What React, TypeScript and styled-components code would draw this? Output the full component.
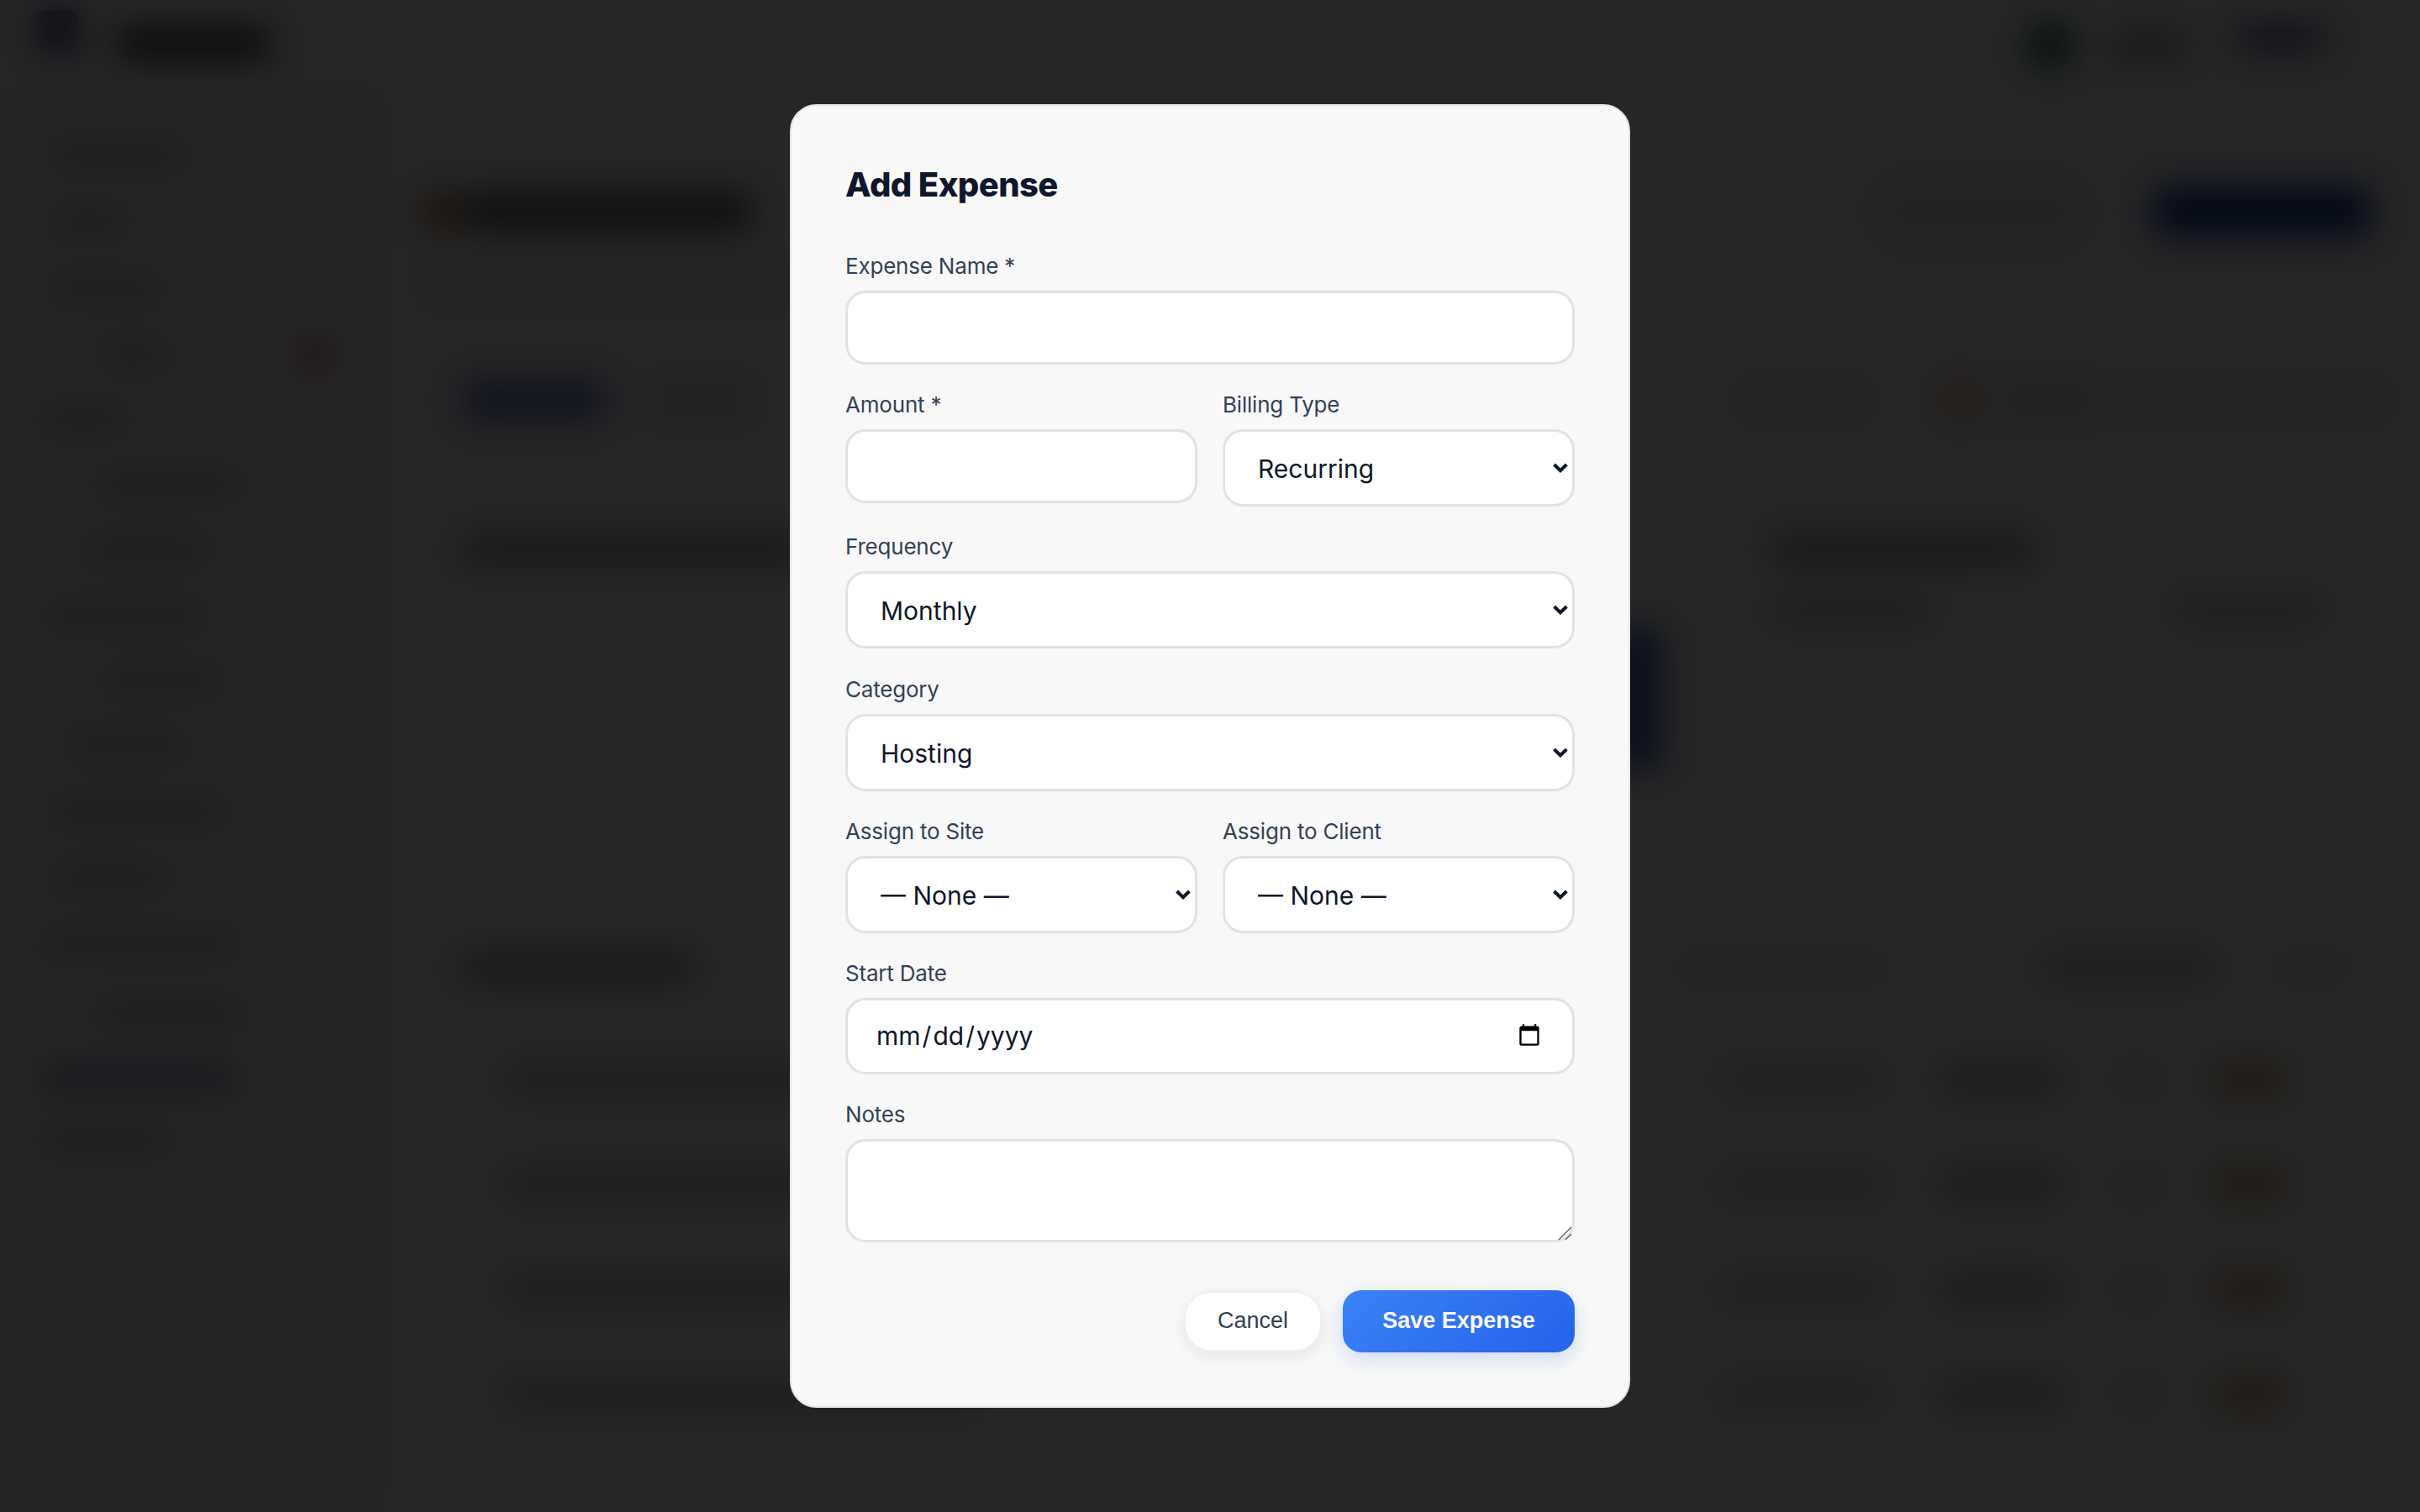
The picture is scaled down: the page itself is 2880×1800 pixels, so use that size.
import React from "react";
import styled, { createGlobalStyle } from "styled-components";

const navRows = [
  { h: 40, left: 30, w: 80 },
  { h: 40, left: 30, w: 45 },
  { h: 40, left: 30, w: 65 },
  { h: 38, left: 60, w: 40, badge: true },
  { h: 39, left: 25, w: 50 },
  { h: 39, left: 58, w: 85 },
  { h: 39, left: 50, w: 75 },
  { h: 39, left: 28, w: 92 },
  { h: 38, left: 62, w: 68 },
  { h: 39, left: 40, w: 70 },
  { h: 40, left: 30, w: 105 },
  { h: 39, left: 30, w: 70 },
  { h: 40, left: 25, w: 115 },
  { h: 42, left: 58, w: 87 },
  { h: 36, left: 25, w: 115, active: true },
  { h: 38, left: 25, w: 75 },
];

const tableRows = [0, 1, 2, 3];

const GlobalStyle = createGlobalStyle`
  html, body {
    margin: 0;
    padding: 0;
    background: #252525;
    overflow: hidden;
  }
  * {
    box-sizing: border-box;
  }
`;

const Stage = styled.div`
  zoom: 2;
  position: relative;
  width: 1440px;
  height: 900px;
  overflow: hidden;
  background: #fbfbfb;
  font-family: Inter, "Liberation Sans", sans-serif;
`;

// the dashboard that sits behind the dialog, only visible as blurred shapes
const Page = styled.div`
  display: grid;
  grid-template-columns: 222px 1fr;
  grid-template-rows: 56px 1fr;
  height: 100%;
`;

const Brand = styled.div`
  grid-column: 1 / 3;
  display: flex;
  align-items: flex-start;
  padding: 6px 55px 0 22px;
`;

const Logo = styled.div`
  width: 25px;
  height: 25px;
  border-radius: 6px;
  background: #3b5188;
`;

const BrandName = styled.div`
  width: 90px;
  height: 18px;
  margin: 11px 0 0 23px;
  background: #2c3440;
  border-radius: 4px;
`;

const Spacer = styled.div`
  flex: 1;
`;

const Avatar = styled.div`
  width: 26px;
  height: 26px;
  margin-top: 8px;
  border-radius: 50%;
  background: #065f46;
`;

const UserName = styled.div`
  width: 45px;
  height: 10px;
  margin: 16px 0 0 23px;
  background: #64748b;
  border-radius: 3px;
`;

const UserBadge = styled.div`
  width: 56px;
  height: 13px;
  margin: 10px 0 0 28px;
  background: #475a8f;
  border-radius: 6px;
`;

const Sidebar = styled.aside`
  padding-top: 16px;
  background: #f5f6f7;
  border-right: 8px solid #eef0f4;
`;

const NavRow = styled.div<{ $h: number }>`
  display: flex;
  align-items: center;
  height: ${(p) => p.$h}px;
`;

const NavLabel = styled.div<{ $left: number; $w: number; $active?: boolean }>`
  width: ${(p) => p.$w}px;
  height: 12px;
  margin-left: ${(p) => p.$left}px;
  border-radius: 3px;
  background: ${(p) => (p.$active ? "#7d8db0" : "#b4bac3")};
`;

const NavBadge = styled.div`
  width: 16px;
  height: 16px;
  margin-left: 79px;
  border-radius: 50%;
  background: #dc2626;
`;

const Main = styled.main`
  padding: 54px 20px 0 33px;
`;

const TitleRow = styled.div`
  display: flex;
  align-items: center;
  height: 32px;
`;

const TitleIcon = styled.div`
  width: 18px;
  height: 18px;
  margin-right: 4px;
  border-radius: 4px;
  background: #92400e;
`;

const Title = styled.div`
  width: 170px;
  height: 20px;
  background: #4a4a4a;
  border-radius: 4px;
`;

const GhostButton = styled.div`
  width: 118px;
  height: 30px;
  background: #e6e8eb;
  border-radius: 8px;
`;

const PrimaryButton = styled.div`
  width: 130px;
  height: 30px;
  margin-left: 44px;
  margin-right: 9px;
  background: #1e40af;
  border-radius: 8px;
`;

const Subtitle = styled.div`
  width: 280px;
  height: 10px;
  margin-top: 21px;
  border-radius: 3px;
  background: #d4d7dc;
`;

const Tabs = styled.div`
  display: flex;
  align-items: center;
  height: 28px;
  margin: 51px 0 0 19px;
`;

const ActiveTab = styled.div`
  width: 88px;
  height: 24px;
  background: #6c80c8;
  border-radius: 12px;
`;

const Tab = styled.div<{ $w: number; $gap: number; $faint?: boolean }>`
  width: ${(p) => p.$w}px;
  height: 12px;
  margin-left: ${(p) => p.$gap}px;
  background: ${(p) => (p.$faint ? "#e8eaee" : "#bcc2cb")};
  border-radius: 3px;
`;

const TabDot = styled.div`
  width: 14px;
  height: 14px;
  margin-left: 50px;
  border-radius: 50%;
  background: #ea580c;
`;

const Charts = styled.div`
  display: grid;
  grid-template-columns: 1fr 400px;
  gap: 22px;
  margin-top: 53px;
  height: 199px;
`;

const Card = styled.section`
  position: relative;
  padding: 14px 18px;
  border: 2px solid #f4f5f7;
  border-radius: 12px;
  background: #ffffff;
`;

const CardTitle = styled.div<{ $w: number; $inset?: number }>`
  width: ${(p) => p.$w}px;
  height: 14px;
  margin-left: ${(p) => p.$inset ?? 0}px;
  background: #858990;
  border-radius: 4px;
`;

const ChartBar = styled.div`
  position: absolute;
  top: 67px;
  right: 8px;
  width: 28px;
  height: 84px;
  border-radius: 4px;
  background: #3a5ab8;
`;

const LegendRow = styled.div`
  display: flex;
  justify-content: space-between;
  margin: 22px 20px 0 14px;
`;

const LegendText = styled.div<{ $w: number }>`
  width: ${(p) => p.$w}px;
  height: 12px;
  background: #b0b5bc;
  border-radius: 3px;
`;

const TableCard = styled(Card)`
  margin-top: 36px;
  padding: 0 18px;
  height: 340px;
`;

const TableHead = styled.div`
  display: flex;
  align-items: center;
  height: 69px;
  padding-bottom: 1px;
`;

const HeadAction = styled.div<{ $w: number; $gap: number; $dark?: boolean }>`
  width: ${(p) => p.$w}px;
  height: 14px;
  margin-left: ${(p) => p.$gap}px;
  background: ${(p) => (p.$dark ? "#b4b7bc" : "#e8eaee")};
  border-radius: 4px;
`;

const TableRow = styled.div`
  display: grid;
  grid-template-columns: 1fr 96px 70px 20px 41px;
  column-gap: 36px;
  align-items: center;
  height: 62.5px;
  padding: 0 41px 0 26px;
`;

const RowName = styled.div`
  width: 280px;
  height: 14px;
  background: #b4b7bc;
  border-radius: 4px;
`;

const RowCell = styled.div<{ $c: string; $h?: number }>`
  height: ${(p) => p.$h ?? 12}px;
  background: ${(p) => p.$c};
  border-radius: 4px;
`;

const Overlay = styled.div`
  position: absolute;
  inset: 0;
  display: flex;
  align-items: center;
  justify-content: center;
  background: rgba(0, 0, 0, 0.85);
  backdrop-filter: blur(10px);
`;

const Modal = styled.form`
  width: 500px;
  height: 776px;
  padding: 32px;
  background: #f8f8f8;
  border: 1px solid #e5e5e5;
  border-radius: 16px;
`;

const ModalTitle = styled.h2`
  margin: 0 0 26px;
  padding-top: 1px;
  font-size: 20px;
  line-height: 28px;
  font-weight: 800;
  letter-spacing: -0.3px;
  color: #0f172a;
`;

const Field = styled.div`
  margin-bottom: 15.6px;
  min-width: 0;
`;

const TwoCols = styled.div`
  display: grid;
  grid-template-columns: 1fr 1fr;
  column-gap: 15px;
  align-items: start;
`;

const Label = styled.label`
  display: block;
  margin-bottom: 6px;
  font-size: 13px;
  line-height: 17px;
  font-weight: 400;
  letter-spacing: -0.1px;
  color: #334155;
`;

const controlBase = `
  display: block;
  width: 100%;
  padding: 12px 16px;
  border: 1.5px solid #e2e2e2;
  border-radius: 12px;
  background: #ffffff;
  color: #0f172a;
  font-family: Inter, "Liberation Sans", sans-serif;
  outline: none;
`;

const TextInput = styled.input`
  ${controlBase}
  height: 44px;
  font-size: 14px;
`;

const SelectBox = styled.div`
  position: relative;
`;

const Select = styled.select`
  ${controlBase}
  appearance: none;
  height: 46px;
  padding: 12.5px 24px 11.5px 19.5px;
  font-size: 15px;
`;

const Chevron = styled.svg`
  position: absolute;
  top: 20px;
  right: 4px;
  width: 9px;
  height: 6px;
  pointer-events: none;
`;

const DateInput = styled.input`
  ${controlBase}
  height: 45.5px;
  font-size: 15px;
`;

const NotesBox = styled.div`
  position: relative;
`;

const Notes = styled.textarea`
  ${controlBase}
  height: 61.5px;
  font-size: 14px;
  resize: none;
`;

const Grip = styled.svg`
  position: absolute;
  right: 1px;
  bottom: 1px;
  width: 9px;
  height: 9px;
  pointer-events: none;
`;

const Actions = styled.div`
  display: flex;
  justify-content: flex-end;
  align-items: center;
  gap: 7px;
  margin-top: 28.4px;
`;

const CancelButton = styled.button`
  width: 82px;
  height: 36px;
  margin-right: 5.5px;
  border: 1px solid #f0f0f0;
  border-radius: 16px;
  background: #ffffff;
  color: #334155;
  font-family: "Liberation Sans", Arial, sans-serif;
  font-size: 13.5px;
  font-weight: 400;
  box-shadow: 0 3px 10px rgba(0, 0, 0, 0.07);
`;

const SaveButton = styled.button`
  width: 138px;
  height: 37px;
  border: none;
  border-radius: 11px;
  background: linear-gradient(135deg, #3b82f6, #2563eb);
  color: #ffffff;
  font-family: "Liberation Sans", Arial, sans-serif;
  font-size: 13.5px;
  font-weight: 700;
  box-shadow: 0 4px 12px rgba(37, 99, 235, 0.2);
`;

const Dropdown: React.FC<{ options: string[] }> = ({ options }) => (
  <SelectBox>
    <Select>
      {options.map((option) => (
        <option key={option}>{option}</option>
      ))}
    </Select>
    <Chevron viewBox="0 0 9 6" aria-hidden="true">
      <path d="M0.8 1 L4.5 4.6 L8.2 1" fill="none" stroke="#0f172a" strokeWidth="2" />
    </Chevron>
  </SelectBox>
);

export default function App() {
  return (
    <Stage>
      <GlobalStyle />
      <Page aria-hidden="true">
        <Brand>
          <Logo />
          <BrandName />
          <Spacer />
          <Avatar />
          <UserName />
          <UserBadge />
        </Brand>
        <Sidebar>
          {navRows.map((row, idx) => (
            <NavRow key={idx} $h={row.h}>
              <NavLabel $left={row.left} $w={row.w} $active={row.active} />
              {row.badge && <NavBadge />}
            </NavRow>
          ))}
        </Sidebar>
        <Main>
          <TitleRow>
            <TitleIcon />
            <Title />
            <Spacer />
            <GhostButton />
            <PrimaryButton />
          </TitleRow>
          <Subtitle />
          <Tabs>
            <ActiveTab />
            <Tab $w={50} $gap={30} />
            <Spacer />
            <Tab $w={76} $gap={0} $faint />
            <TabDot />
            <Tab $w={50} $gap={20} />
            <Tab $w={140} $gap={17} $faint />
            <Tab $w={18} $gap={0} $faint />
          </Tabs>
          <Charts>
            <Card>
              <CardTitle $w={205} />
              <ChartBar />
            </Card>
            <Card>
              <CardTitle $w={156} $inset={14} />
              <LegendRow>
                <LegendText $w={95} />
                <LegendText $w={85} />
              </LegendRow>
            </Card>
          </Charts>
          <TableCard>
            <TableHead>
              <CardTitle $w={138} />
              <Spacer />
              <HeadAction $w={128} $gap={0} />
              <HeadAction $w={102} $gap={92} $dark />
              <HeadAction $w={31} $gap={33} />
              <HeadAction $w={18} $gap={0} />
            </TableHead>
            {tableRows.map((row) => (
              <TableRow key={row}>
                <RowName />
                <RowCell $c="#c4c7cc" />
                <RowCell $c="#9a9da2" />
                <RowCell $c="#c4c7cc" />
                <RowCell $c="#cfa878" $h={18} />
              </TableRow>
            ))}
          </TableCard>
        </Main>
      </Page>
      <Overlay>
        <Modal>
          <ModalTitle>Add Expense</ModalTitle>
          <Field>
            <Label>Expense Name *</Label>
            <TextInput type="text" />
          </Field>
          <TwoCols>
            <Field>
              <Label>Amount *</Label>
              <TextInput type="text" />
            </Field>
            <Field>
              <Label>Billing Type</Label>
              <Dropdown options={["Recurring", "One-time"]} />
            </Field>
          </TwoCols>
          <Field>
            <Label>Frequency</Label>
            <Dropdown options={["Monthly", "Yearly"]} />
          </Field>
          <Field>
            <Label>Category</Label>
            <Dropdown options={["Hosting", "Software"]} />
          </Field>
          <TwoCols>
            <Field>
              <Label>Assign to Site</Label>
              <Dropdown options={["— None —"]} />
            </Field>
            <Field>
              <Label>Assign to Client</Label>
              <Dropdown options={["— None —"]} />
            </Field>
          </TwoCols>
          <Field>
            <Label>Start Date</Label>
            <DateInput type="date" />
          </Field>
          <Field>
            <Label>Notes</Label>
            <NotesBox>
              <Notes />
              <Grip viewBox="0 0 9 9" aria-hidden="true">
                <path d="M0.5 8.5 L8 1 M4.5 8.5 L8 5" fill="none" stroke="#555555" strokeWidth="0.6" />
              </Grip>
            </NotesBox>
          </Field>
          <Actions>
            <CancelButton type="button">Cancel</CancelButton>
            <SaveButton type="button">Save Expense</SaveButton>
          </Actions>
        </Modal>
      </Overlay>
    </Stage>
  );
}
